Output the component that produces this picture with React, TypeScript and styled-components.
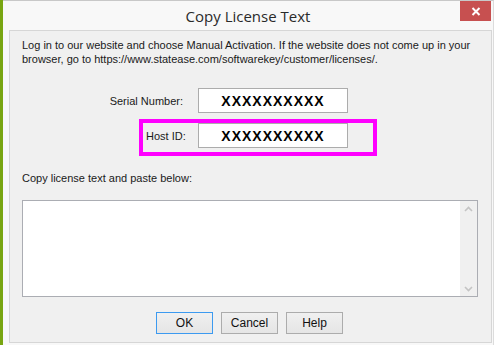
import React from "react";
import styled, { createGlobalStyle } from "styled-components";

const Global = createGlobalStyle`
  html, body { margin: 0; padding: 0; background: #ffffff; }
  body { width: 497px; height: 345px; overflow: hidden; font-family: "Liberation Sans", Arial, sans-serif; }
`;

const Page = styled.div`
  display: flex;
  width: 497px;
  height: 345px;
`;

const GreenEdge = styled.div`
  width: 3px;
  background: #78a511;
  flex: none;
`;

const Window = styled.div`
  width: 491px;
  height: 345px;
  box-sizing: border-box;
  background: #f8f8f8;
  border-top: 1px solid #c8c8c8;
  border-right: 1px solid #dcdcdc;
  display: flex;
  flex-direction: column;
`;

const TitleBar = styled.div`
  position: relative;
  height: 29px;
  display: flex;
  align-items: center;
  justify-content: center;
  flex: none;
`;

const Title = styled.div`
  font-family: "Open Sans", "Noto Sans", sans-serif;
  font-size: 15px;
  color: #2a2a2a;
  margin-top: 1px;
`;

const CloseButton = styled.div`
  position: absolute;
  top: 0;
  right: 2px;
  width: 31px;
  height: 20px;
  background: #c75050;
  display: flex;
  align-items: center;
  justify-content: center;
`;

const Client = styled.div`
  margin-left: 6px;
  margin-right: 1px;
  height: 313px;
  box-sizing: border-box;
  border: 1px solid #d6d6d6;
  background: #f0f0f0;
  display: flex;
  flex-direction: column;
  padding: 7px 0 0 12px;
  font-size: 11px;
  color: #1a1a1a;
`;

const Intro = styled.div`
  line-height: 14px;
  width: 470px;
  white-space: nowrap;
`;

const FieldRow = styled.div<{ $indent: number }>`
  display: flex;
  align-items: center;
  margin-left: ${(p) => p.$indent}px;
  margin-top: 22px;
`;

const SerialLabel = styled.div`
  width: 83px;
  text-align: right;
  margin-right: 15px;
`;

const HostBox = styled.div`
  display: flex;
  align-items: center;
  width: 238px;
  height: 37px;
  box-sizing: border-box;
  border: 4px solid #ff00ff;
  padding: 0 0 4px 3px;
  margin-left: 117px;
  margin-top: 6px;
`;

const HostLabel = styled.div`
  width: 52px;
`;

const ValueBox = styled.div`
  width: 150px;
  height: 25px;
  box-sizing: border-box;
  border: 1px solid #acacac;
  background: #ffffff;
  display: flex;
  align-items: center;
  justify-content: center;
  font-family: "Liberation Sans", Arial, sans-serif;
  font-weight: bold;
  font-size: 14px;
  letter-spacing: 1px;
  color: #000;
  padding-top: 1px;
`;

const PasteLabel = styled.div`
  margin-top: 16px;
`;

const TextArea = styled.div`
  margin-top: 16px;
  width: 456px;
  height: 97px;
  box-sizing: border-box;
  border: 1px solid #abadb3;
  background: #ffffff;
  display: flex;
  justify-content: flex-end;
`;

const ScrollBar = styled.div`
  width: 17px;
  background: #f0f0f0;
  display: flex;
  flex-direction: column;
  justify-content: space-between;
  align-items: center;
  padding: 5px 0 4px;
`;

const ButtonRow = styled.div`
  display: flex;
  gap: 8px;
  margin-top: 15px;
  margin-left: 134px;
`;

const Button = styled.div<{ $focused?: boolean }>`
  width: 57px;
  height: 22px;
  box-sizing: border-box;
  border: 1px solid ${(p) => (p.$focused ? "#3c9af0" : "#acacac")};
  background: linear-gradient(#f0f0f0, #e5e5e5);
  display: flex;
  align-items: center;
  justify-content: center;
  font-size: 12px;
  color: #111;
`;

const Chevron = ({ up }: { up?: boolean }) => (
  <svg width="9" height="6" viewBox="0 0 9 6">
    <path
      d={up ? "M1 5 L4.5 1.5 L8 5" : "M1 1 L4.5 4.5 L8 1"}
      fill="none"
      stroke="#c4c4c4"
      strokeWidth="1.6"
    />
  </svg>
);

export default function App() {
  return (
    <>
      <Global />
      <Page>
        <GreenEdge />
        <Window>
          <TitleBar>
            <Title>Copy License Text</Title>
            <CloseButton>
              <svg width="10" height="9" viewBox="0 0 10 9">
                <path d="M1.5 1 L8.5 8 M8.5 1 L1.5 8" stroke="#fff" strokeWidth="2" />
              </svg>
            </CloseButton>
          </TitleBar>
          <Client>
            <Intro>
              Log in to our website and choose Manual Activation. If the website does not come up in your
              <br />
              browser, go to https://www.statease.com/softwarekey/customer/licenses/.
            </Intro>
            <FieldRow $indent={78}>
              <SerialLabel>Serial Number:</SerialLabel>
              <ValueBox>XXXXXXXXXX</ValueBox>
            </FieldRow>
            <HostBox>
              <HostLabel>Host ID:</HostLabel>
              <ValueBox>XXXXXXXXXX</ValueBox>
            </HostBox>
            <PasteLabel>Copy license text and paste below:</PasteLabel>
            <TextArea>
              <ScrollBar>
                <Chevron up />
                <Chevron />
              </ScrollBar>
            </TextArea>
            <ButtonRow>
              <Button $focused>OK</Button>
              <Button>Cancel</Button>
              <Button>Help</Button>
            </ButtonRow>
          </Client>
        </Window>
      </Page>
    </>
  );
}
